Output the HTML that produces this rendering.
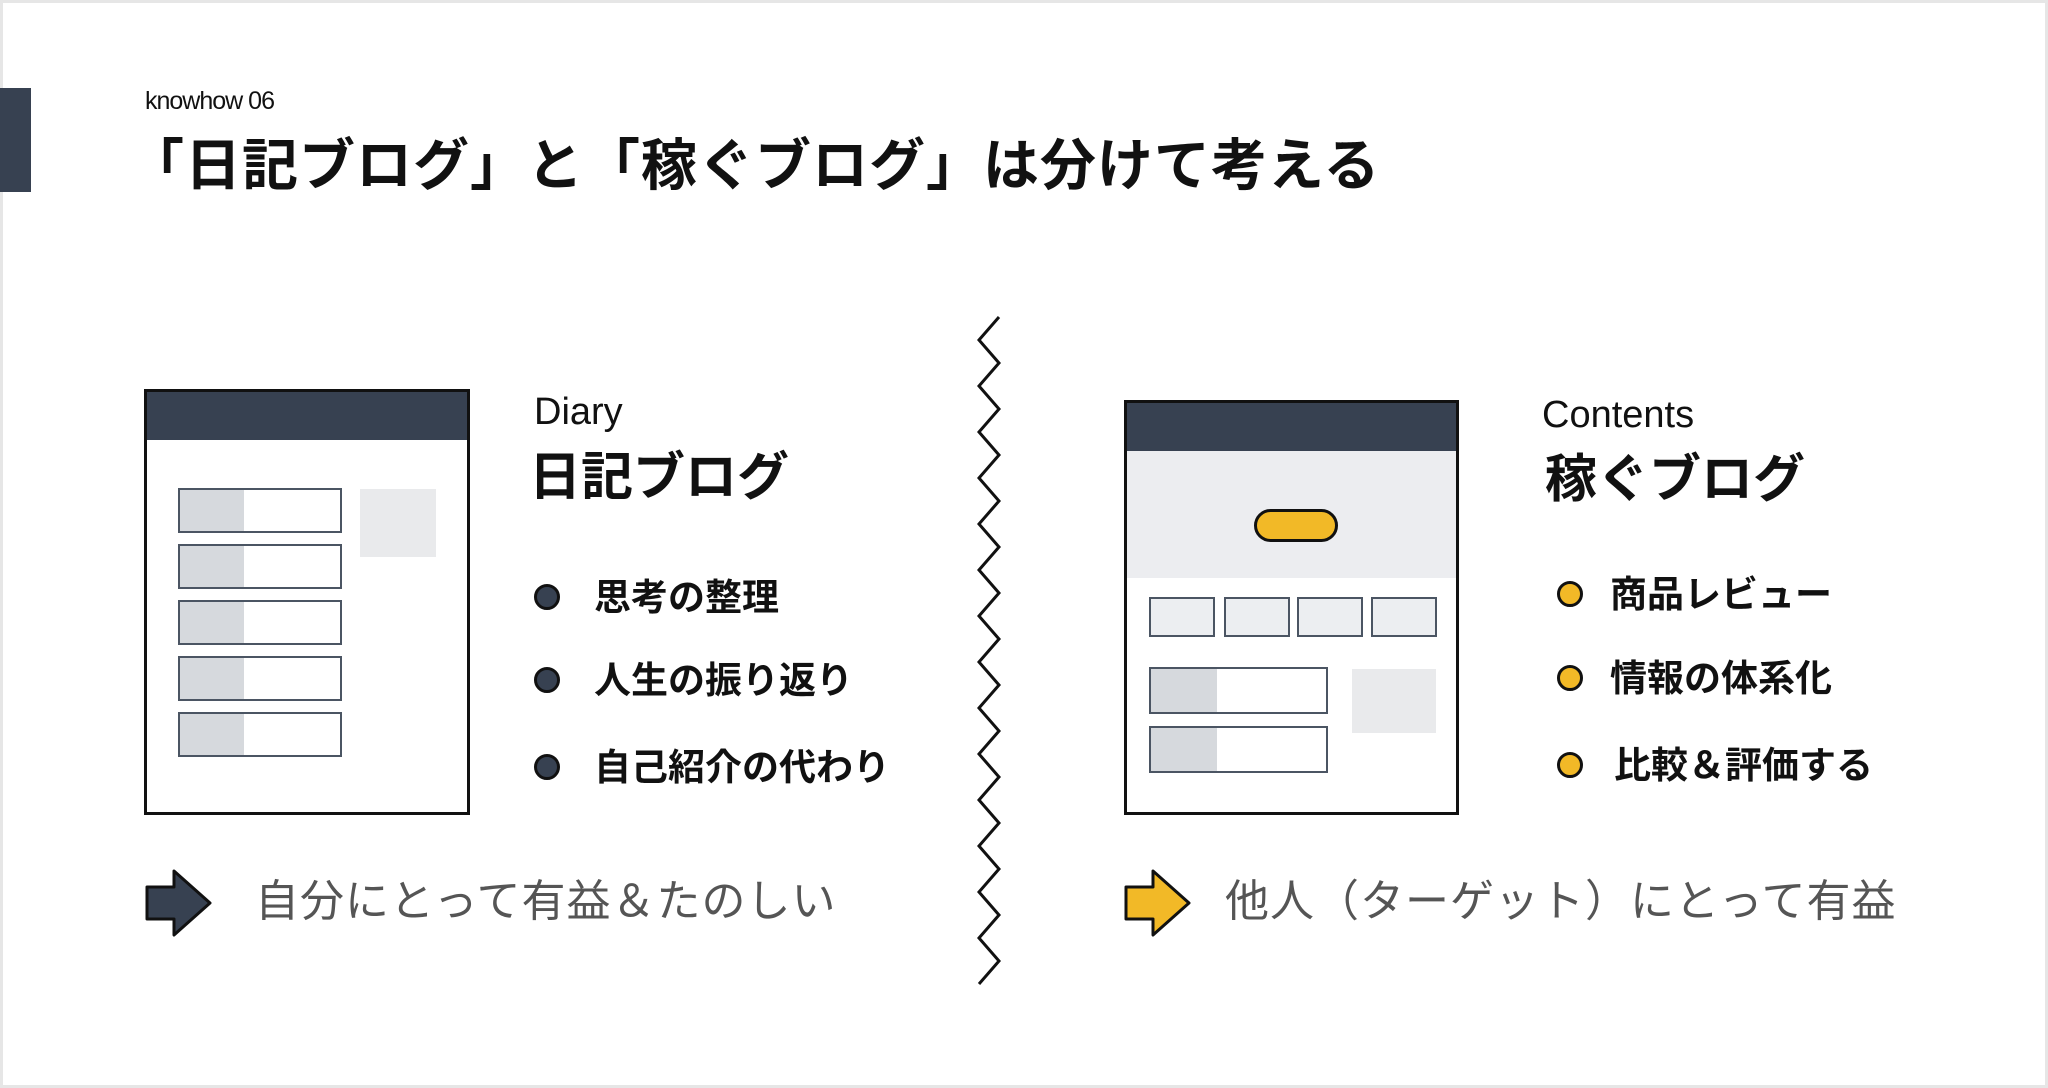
<!DOCTYPE html>
<html><head><meta charset="utf-8"><style>
html,body{margin:0;padding:0}
body{width:2048px;height:1088px;position:relative;background:#fff;overflow:hidden;font-family:"Liberation Sans","Noto Sans CJK JP",sans-serif;color:#111}
.frame{position:absolute;left:0;top:0;width:2042px;height:1082px;border:3px solid #e6e6e6}
.abs{position:absolute;white-space:nowrap}
.win{position:absolute;border:3px solid #111;background:#fff;box-sizing:border-box}
.hdr{position:absolute;left:0;top:0;right:0;background:#374151}
.row{position:absolute;border:2px solid #4b5563;box-sizing:border-box;background:linear-gradient(90deg,#d6d9dd 0,#d6d9dd 64px,#fff 64px)}
.dot{position:absolute;width:26px;height:26px;border-radius:50%;box-sizing:border-box;border:3px solid #111}
.li{position:absolute;font-size:37px;font-weight:bold;white-space:nowrap;line-height:1}
.low{position:absolute;font-size:44px;color:#555;white-space:nowrap;line-height:1;letter-spacing:1px}
</style></head><body>
<div class="frame"></div>
<div class="abs" style="left:0;top:88px;width:31px;height:104px;background:#374151"></div>
<div class="abs" style="left:145px;top:89px;font-size:25px;line-height:1;letter-spacing:-1px">knowhow 06</div>
<div class="abs" style="left:128px;top:138px;font-size:56px;font-weight:bold;line-height:1;letter-spacing:1px">「日記ブログ」と「稼ぐブログ」は分けて考える</div>

<div class="win" style="left:144px;top:389px;width:326px;height:426px">
 <div class="hdr" style="height:48px"></div>
</div>
<div class="row" style="left:178px;top:488px;width:164px;height:45px"></div>
<div class="row" style="left:178px;top:544px;width:164px;height:45px"></div>
<div class="row" style="left:178px;top:600px;width:164px;height:45px"></div>
<div class="row" style="left:178px;top:656px;width:164px;height:45px"></div>
<div class="row" style="left:178px;top:712px;width:164px;height:45px"></div>
<div class="abs" style="left:360px;top:489px;width:76px;height:68px;background:#e9eaec"></div>

<div class="abs" style="left:534px;top:393px;font-size:38px;line-height:1">Diary</div>
<div class="abs" style="left:529px;top:452px;font-size:52px;font-weight:bold;line-height:1">日記ブログ</div>
<div class="dot" style="left:534px;top:584px;background:#374151"></div>
<div class="li" style="left:594px;top:579px">思考の整理</div>
<div class="dot" style="left:534px;top:667px;background:#374151"></div>
<div class="li" style="left:594px;top:662px">人生の振り返り</div>
<div class="dot" style="left:534px;top:754px;background:#374151"></div>
<div class="li" style="left:594px;top:749px">自己紹介の代わり</div>

<svg class="abs" style="left:144px;top:868px" width="72" height="70" viewBox="0 0 72 70"><path d="M3 19 H30 V3 L66 35 L30 67 V51 H3 Z" fill="#374151" stroke="#111" stroke-width="3" stroke-linejoin="round"/></svg>
<div class="low" style="left:255px;top:880px">自分にとって有益＆たのしい</div>

<svg class="abs" style="left:975px;top:315px" width="30" height="670" viewBox="0 0 30 670">
<path id="z" fill="none" stroke="#111" stroke-width="3" stroke-linejoin="miter"/>
</svg>
<script>
(function(){var d="M24 2",y=2,l=true;while(y<660){y+=23;d+=" L"+(l?4:24)+" "+y;l=!l;}document.getElementById('z').setAttribute('d',d);})();
</script>

<div class="win" style="left:1124px;top:400px;width:335px;height:415px">
 <div class="hdr" style="height:48px"></div>
 <div class="abs" style="left:0;right:0;top:48px;height:127px;background:#ecedf0"></div>
</div>
<div class="abs" style="left:1254px;top:509px;width:84px;height:33px;box-sizing:border-box;border:3px solid #111;border-radius:17px;background:#f2b927"></div>
<div class="row" style="left:1149px;top:597px;width:66px;height:40px;background:#eceef1"></div>
<div class="row" style="left:1224px;top:597px;width:66px;height:40px;background:#eceef1"></div>
<div class="row" style="left:1297px;top:597px;width:66px;height:40px;background:#eceef1"></div>
<div class="row" style="left:1371px;top:597px;width:66px;height:40px;background:#eceef1"></div>
<div class="row" style="left:1149px;top:667px;width:179px;height:47px;background:linear-gradient(90deg,#d6d9dd 0,#d6d9dd 66px,#fff 66px)"></div>
<div class="row" style="left:1149px;top:726px;width:179px;height:47px;background:linear-gradient(90deg,#d6d9dd 0,#d6d9dd 66px,#fff 66px)"></div>
<div class="abs" style="left:1352px;top:669px;width:84px;height:64px;background:#e9eaec"></div>

<div class="abs" style="left:1542px;top:396px;font-size:38px;line-height:1">Contents</div>
<div class="abs" style="left:1545px;top:454px;font-size:52px;font-weight:bold;line-height:1">稼ぐブログ</div>
<div class="dot" style="left:1557px;top:581px;background:#f2b927"></div>
<div class="li" style="left:1610px;top:576px">商品レビュー</div>
<div class="dot" style="left:1557px;top:665px;background:#f2b927"></div>
<div class="li" style="left:1610px;top:660px">情報の体系化</div>
<div class="dot" style="left:1557px;top:752px;background:#f2b927"></div>
<div class="li" style="left:1614px;top:747px">比較＆評価する</div>

<svg class="abs" style="left:1123px;top:868px" width="72" height="70" viewBox="0 0 72 70"><path d="M3 19 H30 V3 L66 35 L30 67 V51 H3 Z" fill="#f2b927" stroke="#111" stroke-width="3" stroke-linejoin="round"/></svg>
<div class="low" style="left:1225px;top:880px">他人（ターゲット）にとって有益</div>
</body></html>
